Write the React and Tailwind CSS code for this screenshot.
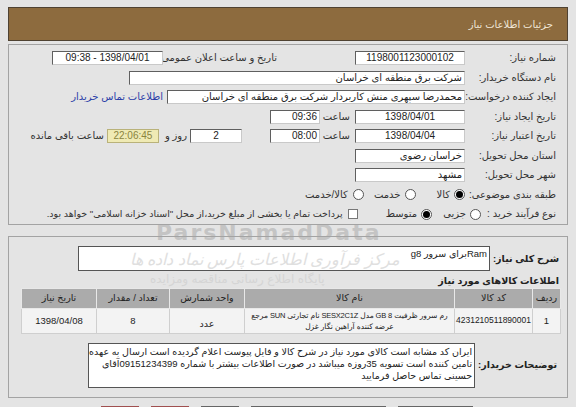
import React from "react";

const font = { fontFamily: '"Liberation Sans", "DejaVu Sans", sans-serif' };

function Box({ className = "", children, align = "center" }) {
  const justify = align === "right" ? "justify-start" : "justify-center";
  return (
    <div
      className={`flex h-[14px] shrink-0 items-center ${justify} overflow-hidden whitespace-nowrap border border-[#5f5f5f] border-r-[#c9c9c9] border-b-[#c9c9c9] bg-white px-[2px] text-[10px] leading-none text-[#222] ${className}`}
    >
      {children}
    </div>
  );
}

function Label({ className = "", children }) {
  return (
    <div className={`shrink-0 whitespace-nowrap text-right text-[10px] leading-none text-[#333] ${className}`}>
      {children}
    </div>
  );
}

function Radio({ checked }) {
  return (
    <span className="flex h-[11px] w-[11px] shrink-0 items-center justify-center rounded-full border border-[#555] bg-white">
      {checked && <span className="h-[7px] w-[7px] rounded-full bg-black" />}
    </span>
  );
}

export default function App() {
  return (
    <div
      dir="rtl"
      style={font}
      className="relative h-[407px] w-[576px] overflow-hidden bg-[#e4e4e4]"
    >
      {/* watermark, under the content */}
      <div
        dir="ltr"
        className="pointer-events-none absolute left-[156px] top-[222px] text-[22px] font-black leading-none tracking-[2px] text-[#c4c4c4]"
        style={{ fontFamily: '"DejaVu Sans", sans-serif' }}
      >
        ParsNamadData
      </div>

      <div className="relative px-[8px] pt-[7px]">
        {/* header bar */}
        <div className="flex h-[34px] items-center border border-[#4f4232] bg-[#8d6b3e] pr-[14px] text-[10px] text-[#efe6d6]">
          جزئیات اطلاعات نیاز
        </div>

        {/* first panel */}
        <div className="mt-[3px] border border-[#a3a3a3] pt-[6px] pb-[3px] pr-[11px]">
          <div className="flex flex-col gap-[5.5px]">
            <div className="flex h-[14px] items-center">
              <Label className="w-[86px]">شماره نیاز:</Label>
              <Box className="mr-[5px] w-[110px]">1198001123000102</Box>
              <Label className="mr-[78px] w-[111px]">تاریخ و ساعت اعلان عمومی:</Label>
              <Box className="mr-[3px] w-[111px]">1398/04/01 - 09:38</Box>
            </div>
            <div className="flex h-[14px] items-center">
              <Label className="w-[86px]">نام دستگاه خریدار:</Label>
              <Box className="mr-[5px] w-[336px]" align="right">شرکت برق منطقه ای خراسان</Box>
            </div>
            <div className="flex h-[14px] items-center">
              <Label className="w-[86px]">ایجاد کننده درخواست:</Label>
              <Box className="mr-[5px] w-[298px]" align="right">
                محمدرضا سپهری منش کاربردار شرکت برق منطقه ای خراسان
              </Box>
              <span className="mr-[4px] whitespace-nowrap text-[10px] leading-none text-[#2c3fa8]">اطلاعات تماس خریدار</span>
            </div>
            <div className="flex h-[14px] items-center">
              <Label className="w-[86px]">تاریخ ایجاد نیاز:</Label>
              <Box className="mr-[5px] w-[110px]">1398/04/01</Box>
              <Label className="mr-[5px] w-[26px]">ساعت</Label>
              <Box className="mr-[4px] w-[50px]" align="right">09:36</Box>
            </div>
            <div className="flex h-[14px] items-center">
              <Label className="w-[86px]">تاریخ اعتبار نیاز:</Label>
              <Box className="mr-[5px] w-[110px]">1398/04/04</Box>
              <Label className="mr-[5px] w-[26px]">ساعت</Label>
              <Box className="mr-[4px] w-[50px]" align="right">08:00</Box>
              <Box className="mr-[28px] w-[52px]">2</Box>
              <Label className="mr-[3px]">روز و</Label>
              <div className="mr-[6px] flex h-[14px] w-[52px] items-center justify-center border border-[#b9b27a] bg-[#efeab4] text-[10px] leading-none text-[#8a8440]">
                22:06:45
              </div>
              <Label className="mr-[3px]">ساعت باقی مانده</Label>
            </div>
            <div className="flex h-[14px] items-center">
              <Label className="w-[86px]">استان محل تحویل:</Label>
              <Box className="mr-[5px] w-[110px]" align="right">خراسان رضوی</Box>
            </div>
            <div className="flex h-[14px] items-center">
              <Label className="w-[86px]">شهر محل تحویل:</Label>
              <Box className="mr-[5px] w-[110px]" align="right">مشهد</Box>
            </div>
            <div className="flex h-[14px] items-center text-[10px] text-[#333]">
              <Label className="w-[86px]">طبقه بندی موضوعی:</Label>
              <span className="mr-[5px]"><Radio checked /></span>
              <span className="mr-[4px] leading-none">کالا</span>
              <span className="mr-[20px]"><Radio /></span>
              <span className="mr-[5px] leading-none">خدمت</span>
              <span className="mr-[10px]"><Radio /></span>
              <span className="mr-[5px] leading-none">کالا/خدمت</span>
            </div>
            <div className="flex h-[14px] items-center text-[10px] text-[#333]">
              <Label className="w-[75px]">نوع فرآیند خرید :</Label>
              <Radio />
              <span className="mr-[4px] leading-none">جزیی</span>
              <span className="mr-[11px]"><Radio checked /></span>
              <span className="mr-[4px] leading-none">متوسط</span>
              <span className="mr-[28px] h-[10px] w-[10px] shrink-0 border border-[#777] bg-white" />
              <span className="mr-[5px] whitespace-nowrap text-[9.5px] leading-none">
                پرداخت تمام یا بخشی از مبلغ خرید،از محل "اسناد خزانه اسلامی" خواهد بود.
              </span>
            </div>
          </div>
        </div>

        {/* second panel */}
        <div className="mt-[11px] border border-[#a3a3a3] pt-[9px] pb-[9px] pr-[6px]">
          <div className="flex items-center pr-[2px] pl-[69px]">
            <div className="shrink-0 whitespace-nowrap text-right text-[9.5px] font-bold leading-none text-[#222]">
              شرح کلی نیاز:
            </div>
            <div className="mr-[3px] h-[25px] flex-1 border border-[#555] bg-white px-[2px] pt-[2px] text-[9.5px] leading-none text-[#222]">
              Ramبرای سرور g8
            </div>
          </div>

          <div className="mt-[5px] pr-[2px] text-[9.5px] font-bold leading-none text-[#222]">
            اطلاعات کالاهای مورد نیاز
          </div>

          <table className="mt-[2px] w-[540px] table-fixed border-collapse text-center text-[9.5px] leading-none text-[#222]">
            <thead>
              <tr className="h-[20px] bg-[#ababab]">
                <th className="w-[28px] border border-[#e8e8e8] font-normal">ردیف</th>
                <th className="w-[78px] border border-[#e8e8e8] font-normal">کد کالا</th>
                <th className="w-[210px] border border-[#e8e8e8] font-normal">نام کالا</th>
                <th className="w-[75px] border border-[#e8e8e8] font-normal">واحد شمارش</th>
                <th className="w-[73px] border border-[#e8e8e8] font-normal">تعداد / مقدار</th>
                <th className="border border-[#e8e8e8] font-normal">تاریخ نیاز</th>
              </tr>
            </thead>
            <tbody>
              <tr className="h-[25px] bg-[#f3f3f3]">
                <td className="border border-[#cfcfcf]">1</td>
                <td className="border border-[#cfcfcf] px-0 text-[8.5px]">4231210511890001</td>
                <td className="whitespace-nowrap border border-[#cfcfcf] px-0 text-[7.5px] leading-[11px] tracking-[-0.2px]">
                  رم سرور ظرفیت 8 GB مدل SESX2C1Z نام تجارتی SUN مرجع
                  <br />
                  عرضه کننده آراهین نگار غزل
                </td>
                <td className="border border-[#cfcfcf] pt-[6px]">عدد</td>
                <td className="border border-[#cfcfcf]">8</td>
                <td className="border border-[#cfcfcf]">1398/04/08</td>
              </tr>
            </tbody>
          </table>

          <div className="mt-[9px] flex items-center pr-[4px] pl-[79px]">
            <div className="shrink-0 whitespace-nowrap text-right text-[9.5px] font-bold leading-none text-[#222]">
              توضیحات خریدار:
            </div>
            <div className="mr-[3px] h-[45px] flex-1 overflow-hidden whitespace-nowrap border border-[#555] bg-white px-[2px] pt-[2px] text-[9.5px] leading-[12px] text-[#222]">
              ایران کد مشابه است کالای مورد نیاز در شرح کالا و فایل پیوست اعلام گردیده است ارسال به عهده
              <br />
              تامین کننده است تسویه 35روزه میباشد در صورت اطلاعات بیشتر با شماره 09151234399آقای
              <br />
              حسینی تماس حاصل فرمایید
            </div>
          </div>
        </div>

        {/* bottom buttons (mostly cut off) */}
        <div className="mt-[8px] flex gap-[12px] pr-[95px]">
          <div className="h-[20px] w-[75px] border border-[#666] bg-[#e9e9e9]" />
          <div className="h-[20px] w-[135px] border border-[#666] bg-[#e9e9e9]" />
          <div className="h-[20px] w-[38px] border border-[#666] bg-[#e9e9e9]" />
          <div className="h-[20px] w-[38px] border border-[#a05050] bg-[#efd9d9]" />
          <div className="h-[20px] w-[38px] border border-[#a05050] bg-[#efd9d9]" />
        </div>
      </div>

      {/* faint watermark texts over the page */}
      <div className="pointer-events-none absolute left-[130px] top-[252px] whitespace-nowrap text-[16px] italic leading-none text-[#d2d2d2] opacity-70">
        مرکز فرآوری اطلاعات پارس نماد داده ها
      </div>
      <div className="pointer-events-none absolute left-[150px] top-[273px] whitespace-nowrap text-[12px] leading-none text-[#cfcfcf] opacity-70">
        پایگاه اطلاع رسانی مناقصه ومزایده
      </div>
    </div>
  );
}
